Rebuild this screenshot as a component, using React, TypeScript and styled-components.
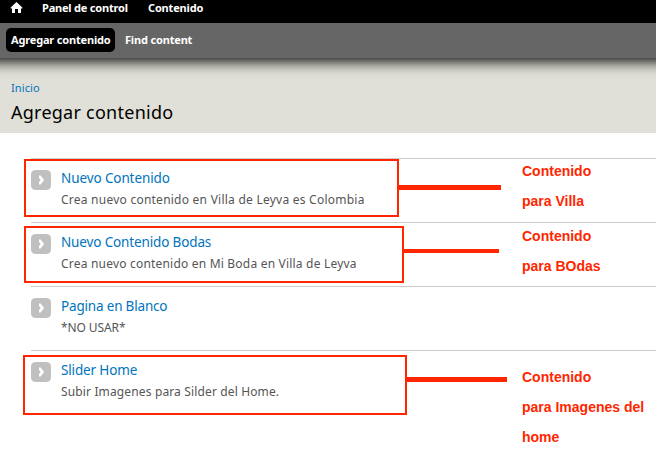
import React from "react";
import styled, { createGlobalStyle } from "styled-components";

const RED = "#ff2600";

const GlobalStyle = createGlobalStyle`
  body {
    margin: 0;
    background: #fff;
    font-family: "Noto Sans", "Open Sans", sans-serif;
    overflow: hidden;
  }
`;

const Page = styled.div`
  position: relative;
  width: 656px;
  height: 457px;
  overflow: hidden;
`;

const Toolbar = styled.nav`
  display: flex;
  align-items: flex-start;
  height: 23px;
  padding-left: 10px;
  background: #000;
`;

const HomeIcon = styled.svg`
  display: block;
  width: 13px;
  height: 12px;
  margin: 2px 19px 0 0;
`;

const NavLink = styled.a<{ $spacing?: number }>`
  display: block;
  font-size: 11px;
  font-weight: 700;
  line-height: 16px;
  letter-spacing: ${(p) => p.$spacing ?? -0.17}px;
  white-space: nowrap;
  color: #fff;
`;

const MenuItem = styled.div<{ $width: number }>`
  width: ${(p) => p.$width}px;
  display: flex;
`;

const Shortcuts = styled.div`
  display: flex;
  align-items: flex-start;
  box-sizing: border-box;
  height: 36px;
  padding: 5px 0 0 6px;
  background: #666;
  border-bottom: 1px solid #50504f;
`;

const Shortcut = styled.div<{ $active?: boolean }>`
  box-sizing: border-box;
  height: 24px;
  width: ${(p) => (p.$active ? 109 : 90)}px;
  margin-right: 5px;
  padding: 4px 5px;
  border-radius: 5px;
  background: ${(p) => (p.$active ? "#000" : "transparent")};
`;

const Branding = styled.header`
  box-sizing: border-box;
  height: 74px;
  padding: 20px 11px 0;
  background: linear-gradient(
      rgba(0, 0, 0, 0.62) 0,
      rgba(0, 0, 0, 0.46) 3px,
      rgba(0, 0, 0, 0.24) 7px,
      rgba(0, 0, 0, 0.08) 12px,
      rgba(0, 0, 0, 0.02) 16px,
      transparent 20px
    )
    #e0e0d8;
`;

const Breadcrumb = styled.a`
  display: block;
  font-size: 11px;
  line-height: 18px;
  letter-spacing: 0.1px;
  color: #0074bd;
`;

const Heading = styled.h1`
  margin: 2px 0 0;
  font-size: 18px;
  font-weight: 400;
  line-height: 27px;
  letter-spacing: 0.25px;
  white-space: nowrap;
  color: #000;
`;

const TypeList = styled.ul`
  list-style: none;
  margin: 25px 0 0 31px;
  padding: 0;
`;

const TypeItem = styled.li`
  display: flex;
  box-sizing: border-box;
  height: 64px;
  padding-top: 11px;
  border-top: 1px solid #ccc;
`;

const Arrow = styled.svg`
  display: block;
  width: 20px;
  height: 20px;
  margin-right: 10px;
`;

const TypeTitle = styled.a<{ $spacing: number }>`
  display: block;
  margin-top: -1px;
  font-size: 13.5px;
  line-height: 18px;
  letter-spacing: ${(p) => p.$spacing}px;
  white-space: nowrap;
  color: #0074bd;
`;

const TypeText = styled.div<{ $spacing: number }>`
  margin-top: 4px;
  font-size: 12px;
  line-height: 18px;
  letter-spacing: ${(p) => p.$spacing}px;
  white-space: nowrap;
  color: #555;
`;

const Highlight = styled.div<{ $x: number; $y: number; $w: number; $h: number }>`
  position: absolute;
  box-sizing: border-box;
  left: ${(p) => p.$x}px;
  top: ${(p) => p.$y}px;
  width: ${(p) => p.$w}px;
  height: ${(p) => p.$h}px;
  border: 2px solid ${RED};
`;

const Connector = styled.div<{ $x: number; $y: number; $w: number; $h: number }>`
  position: absolute;
  left: ${(p) => p.$x}px;
  top: ${(p) => p.$y}px;
  width: ${(p) => p.$w}px;
  height: ${(p) => p.$h}px;
  background: ${RED};
`;

const Note = styled.div<{ $y: number }>`
  position: absolute;
  left: 522px;
  top: ${(p) => p.$y}px;
  font: 700 14px/30px "Liberation Sans", Arial, sans-serif;
  white-space: pre-line;
  color: ${RED};
`;

const types = [
  { title: "Nuevo Contenido", text: "Crea nuevo contenido en Villa de Leyva es Colombia", ts: -0.1, ds: 0.24 },
  { title: "Nuevo Contenido Bodas", text: "Crea nuevo contenido en Mi Boda en Villa de Leyva", ts: -0.14, ds: 0.2 },
  { title: "Pagina en Blanco", text: "*NO USAR*", ts: -0.18, ds: -0.1 },
  { title: "Slider Home", text: "Subir Imagenes para Silder del Home.", ts: -0.15, ds: 0.14 },
];

const notes = [
  { y: 156, text: "Contenido\npara Villa", box: [24, 159, 375, 58], line: [399, 185, 102, 5] },
  { y: 221, text: "Contenido\npara BOdas", box: [24, 226, 380, 57], line: [404, 249, 95, 4] },
  { y: 362, text: "Contenido\npara Imagenes del\nhome", box: [23, 355, 384, 60], line: [407, 377, 100, 5] },
];

export default function App() {
  return (
    <Page>
      <GlobalStyle />
      <Toolbar>
        <HomeIcon viewBox="0 0 13 12">
          <path fill="#fff" d="M6.5 0 12.3 5.6v.9H11V11H8V7H5v4H2V6.5H.7v-.9z" />
        </HomeIcon>
        <MenuItem $width={106}><NavLink $spacing={-0.2}>Panel de control</NavLink></MenuItem>
        <NavLink>Contenido</NavLink>
      </Toolbar>
      <Shortcuts>
        <Shortcut $active><NavLink>Agregar contenido</NavLink></Shortcut>
        <Shortcut><NavLink>Find content</NavLink></Shortcut>
      </Shortcuts>
      <Branding>
        <Breadcrumb>Inicio</Breadcrumb>
        <Heading>Agregar contenido</Heading>
      </Branding>
      <TypeList>
        {types.map((t) => (
          <TypeItem key={t.title}>
            <Arrow viewBox="0 0 20 20">
              <rect width="20" height="20" rx="4.5" fill="#c0c0c0" />
              <path d="M8 5.6h1.6L13 10l-3.4 4.4H8V12l1.8-2L8 8z" fill="#fff" />
            </Arrow>
            <div>
              <TypeTitle $spacing={t.ts}>{t.title}</TypeTitle>
              <TypeText $spacing={t.ds}>{t.text}</TypeText>
            </div>
          </TypeItem>
        ))}
      </TypeList>
      {notes.map((n) => (
        <React.Fragment key={n.y}>
          <Highlight $x={n.box[0]} $y={n.box[1]} $w={n.box[2]} $h={n.box[3]} />
          <Connector $x={n.line[0]} $y={n.line[1]} $w={n.line[2]} $h={n.line[3]} />
          <Note $y={n.y}>{n.text}</Note>
        </React.Fragment>
      ))}
    </Page>
  );
}
